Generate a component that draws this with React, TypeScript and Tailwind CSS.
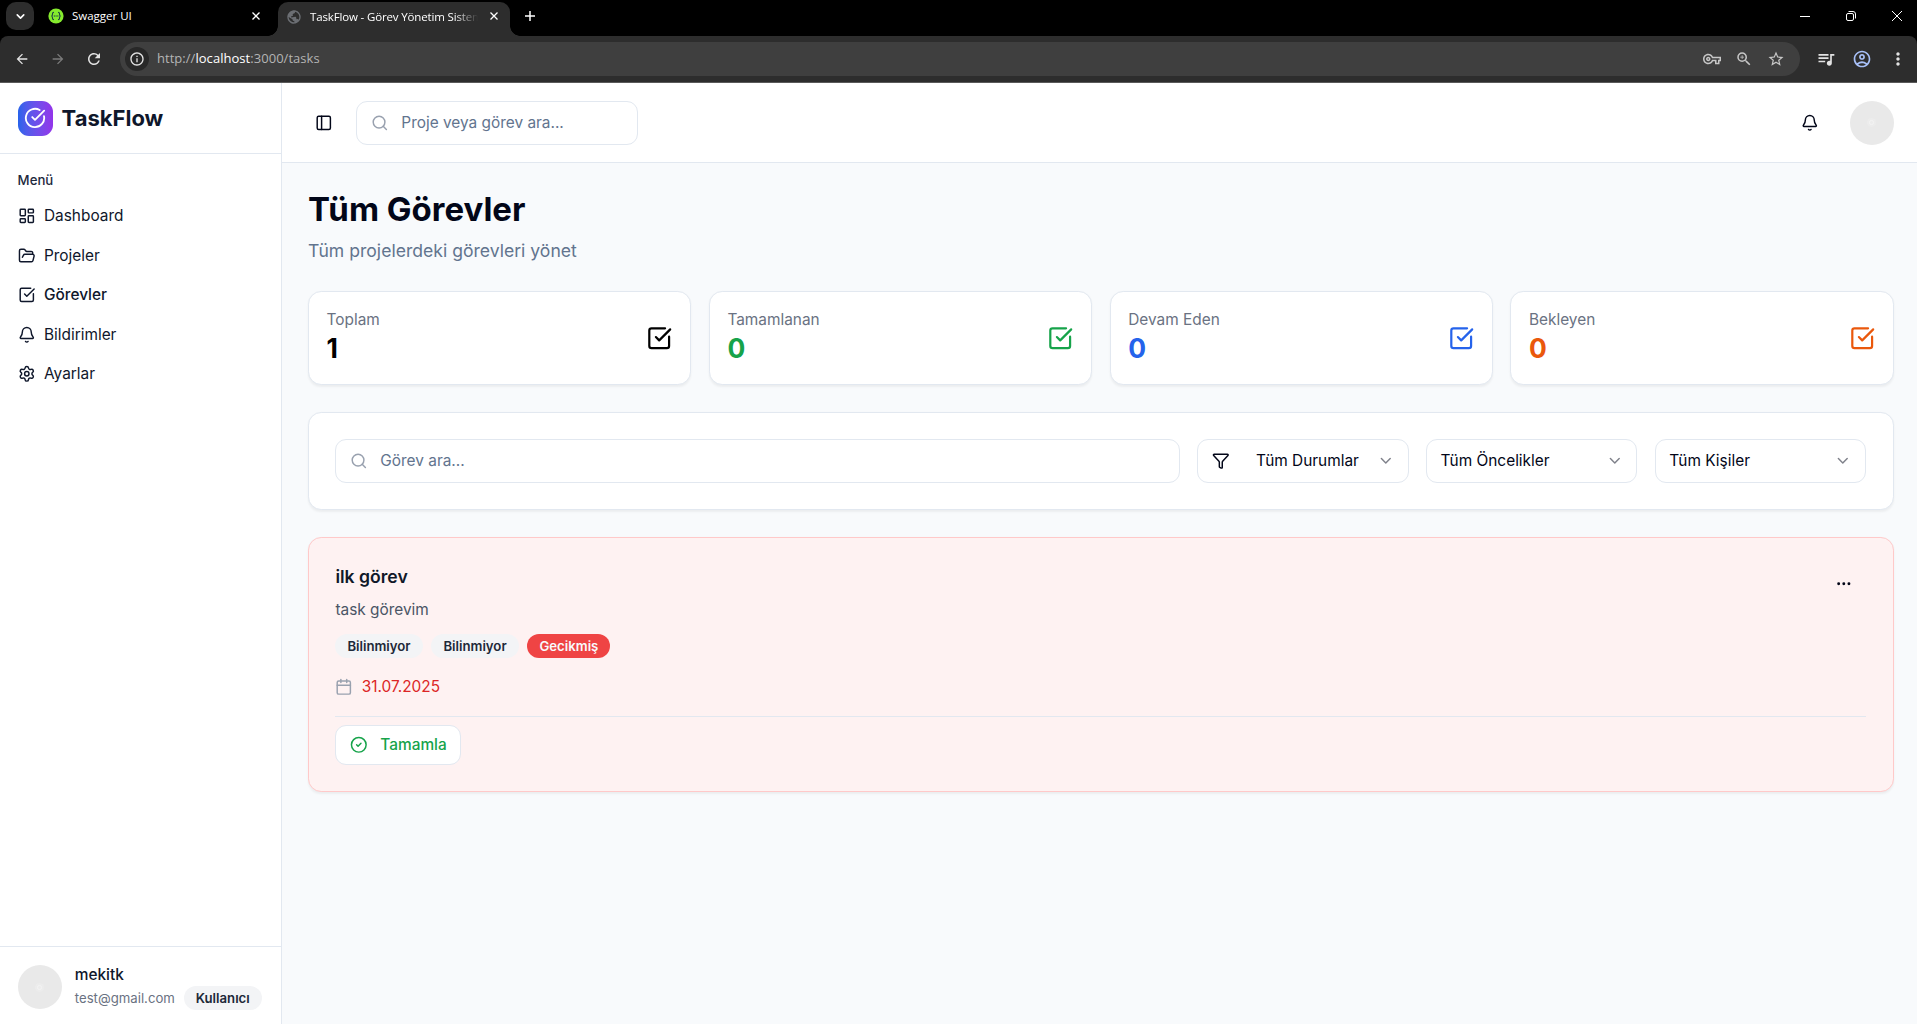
import React from "react";
import {
  Bell,
  Calendar,
  ChevronDown,
  CircleCheck,
  CircleCheckBig,
  Ellipsis,
  FolderOpen,
  Funnel,
  LayoutDashboard,
  PanelLeft,
  Search,
  Settings,
  SquareCheckBig,
} from "lucide-react";
import {
  MdArrowBack,
  MdArrowForward,
  MdMoreVert,
  MdOutlineAccountCircle,
  MdOutlineInfo,
  MdOutlineVpnKey,
  MdPublic,
  MdQueueMusic,
  MdRefresh,
  MdStarBorder,
  MdZoomIn,
} from "react-icons/md";

function CloseGlyph({ className }: { className?: string }) {
  return (
    <svg viewBox="0 0 8 8" className={className} fill="none" stroke="currentColor" strokeWidth="1.3">
      <path d="M0.5 0.5 7.5 7.5M7.5 0.5 0.5 7.5" />
    </svg>
  );
}

function SwaggerIcon() {
  return (
    <svg viewBox="0 0 16 16" className="size-4 shrink-0">
      <circle cx="8" cy="8" r="7.6" fill="#85ea2d" />
      <g fill="none" stroke="#173647" strokeWidth="1.1">
        <path d="M6 4.2c-1.3 0-1.5.6-1.5 1.6S4.3 8 3.4 8c.9 0 1.1 1.2 1.1 2.2s.2 1.6 1.5 1.6" />
        <path d="M10 4.2c1.3 0 1.5.6 1.5 1.6S11.7 8 12.6 8c-.9 0-1.1 1.2-1.1 2.2s-.2 1.6-1.5 1.6" />
        <path d="M5.8 8h4.6" strokeDasharray="1.2 .5" />
      </g>
    </svg>
  );
}

function TabStrip() {
  return (
    <div className="flex h-9 shrink-0 items-start bg-black text-white">
      <div className="ml-1.5 mt-0.5 flex size-7 items-center justify-center rounded-[10px] bg-[#2d2d2d]">
        <ChevronDown size={13} strokeWidth={3} />
      </div>
      <div className="ml-3.5 flex h-8 w-[230px] items-center gap-2">
        <SwaggerIcon />
        <span className="flex-1 text-[11.5px]">Swagger UI</span>
        <CloseGlyph className="mr-[18px] size-2" />
      </div>
      <div className="relative mt-0.5 flex h-[34px] w-[232px] items-center rounded-t-[10px] bg-[#2d2d2d] pb-1 before:absolute before:bottom-0 before:-left-2.5 before:size-2.5 before:bg-[radial-gradient(circle_at_0_0,transparent_9.5px,#2d2d2d_10px)] after:absolute after:bottom-0 after:-right-2.5 after:size-2.5 after:bg-[radial-gradient(circle_at_100%_0,transparent_9.5px,#2d2d2d_10px)]">
        <MdPublic size={16} className="ml-2 shrink-0 -rotate-12 text-[#6b6e73]" />
        <span className="ml-2 w-[168px] overflow-hidden text-[11.5px] tracking-[-0.15px] whitespace-nowrap [mask-image:linear-gradient(to_right,black_144px,transparent_168px)]">
          TaskFlow - Görev Yönetim Sistemi
        </span>
        <CloseGlyph className="absolute top-[10px] right-3 size-2" />
      </div>
      <svg viewBox="0 0 10 10" className="mt-[11px] ml-[15px] size-2.5" stroke="white" strokeWidth="1.5">
        <path d="M5 0v10M0 5h10" />
      </svg>
      <div className="mt-[11px] ml-auto mr-[15px] flex items-start gap-9">
        <svg viewBox="0 0 10 10" className="size-2.5" stroke="white">
          <path d="M0 5.5h10" />
        </svg>
        <svg viewBox="0 0 10 10" className="size-2.5" fill="none" stroke="white">
          <rect x=".5" y="2.5" width="7" height="7" rx="1.5" />
          <path d="M2.5.5H7A2.5 2.5 0 0 1 9.500 3v4.500" />
        </svg>
        <svg viewBox="0 0 10 10" className="size-2.5" stroke="white">
          <path d="M0 0 10 10M10 0 0 10" />
        </svg>
      </div>
    </div>
  );
}

function Toolbar() {
  return (
    <div className="bg-black">
      <div className="flex h-[47px] shrink-0 items-center rounded-t-[8px] border-b border-[#5a5a5a] bg-[#2d2d2d] text-[#e3e3e3]">
        <MdArrowBack size={16} className="ml-3.5" />
        <MdArrowForward size={16} className="ml-5 text-[#7b7b7b]" />
        <MdRefresh size={18} className="ml-[19px]" />
        <div className="ml-[17px] flex h-[34px] flex-1 items-center rounded-full bg-[#3f3f3f]">
          <div className="ml-[5px] flex size-6 items-center justify-center rounded-full bg-[#282828]">
            <MdOutlineInfo size={16} />
          </div>
          <span className="ml-2 text-[13px] tracking-[0.04px] text-[#b4b4b4]">
            http://<span className="text-white">localhost</span>:3000/tasks
          </span>
          <div className="mr-[15px] ml-auto flex items-center gap-4 text-[#c7c7c7]">
            <MdOutlineVpnKey size={18} className="mr-[-2px]" />
            <MdZoomIn size={18} />
            <MdStarBorder size={18} className="-ml-0.5" />
          </div>
        </div>
        <MdQueueMusic size={20} className="ml-4" />
        <MdOutlineAccountCircle size={20} className="ml-4 text-[#a8c0f8]" />
        <MdMoreVert size={20} className="ml-4 mr-[9px]" />
      </div>
    </div>
  );
}

function Avatar() {
  return (
    <div className="flex size-10 shrink-0 items-center justify-center rounded-full bg-[#e9e9e9]">
      <div className="flex size-2 items-center justify-center rounded-full bg-[#ececec]">
        <div className="size-1 rounded-full border border-[#f4f4f4]" />
      </div>
    </div>
  );
}

const menu = [
  { label: "Dashboard", icon: LayoutDashboard },
  { label: "Projeler", icon: FolderOpen },
  { label: "Görevler", icon: SquareCheckBig, active: true },
  { label: "Bildirimler", icon: Bell },
  { label: "Ayarlar", icon: Settings },
];

function Sidebar() {
  return (
    <aside className="flex w-64 shrink-0 flex-col border-r border-slate-200 bg-white text-slate-900">
      <div className="flex h-16 shrink-0 items-center gap-2 px-4">
        <div className="flex size-8 items-center justify-center rounded-[10px] bg-linear-to-r from-[#2563eb] to-[#9333ea] text-white">
          <CircleCheckBig size={20} />
        </div>
        <span className="text-xl font-bold">TaskFlow</span>
      </div>
      <nav className="flex flex-1 flex-col border-t border-slate-200 p-2">
        <div className="flex h-8 items-center px-2 text-xs font-medium text-slate-800">Menü</div>
        <ul className="flex flex-col gap-1">
          {menu.map(({ label, icon: Icon, active }) => (
            <li
              key={label}
              className={
                active
                  ? "flex h-8 items-center gap-2 px-2 text-sm font-medium"
                  : "flex h-8 items-center gap-2 px-2 text-sm"
              }
            >
              <Icon size={16} />
              {label}
            </li>
          ))}
        </ul>
      </nav>
      <div className="flex items-center gap-3 border-t border-slate-200 p-4">
        <Avatar />
        <div>
          <p className="text-sm font-medium">mekitk</p>
          <div className="flex items-center gap-2">
            <span className="text-xs text-gray-500">test@gmail.com</span>
            <span className="rounded-full border border-transparent bg-gray-100 px-2.5 py-0.5 text-xs font-semibold text-gray-800">
              Kullanıcı
            </span>
          </div>
        </div>
      </div>
    </aside>
  );
}

function SearchField({ placeholder, className }: { placeholder: string; className: string }) {
  return (
    <div className={className}>
      <div className="flex h-10 items-center gap-3 rounded-[10px] border border-slate-200 bg-white pl-3 text-sm text-slate-500">
        <Search size={16} className="text-gray-400" />
        <span>{placeholder}</span>
      </div>
    </div>
  );
}

function TopBar() {
  return (
    <header className="flex items-center gap-4 border-b border-slate-200 bg-white px-6 py-4 text-slate-950">
      <div className="flex size-7 items-center justify-center">
        <PanelLeft size={16} />
      </div>
      <SearchField placeholder="Proje veya görev ara..." className="w-64" />
      <div className="ml-auto flex size-10 items-center justify-center">
        <Bell size={16} />
      </div>
      <Avatar />
    </header>
  );
}

const stats = [
  { label: "Toplam", value: 1, color: "text-black" },
  { label: "Tamamlanan", value: 0, color: "text-[#16a34a]" },
  { label: "Devam Eden", value: 0, color: "text-[#2563eb]" },
  { label: "Bekleyen", value: 0, color: "text-[#ea580c]" },
];

function Stats() {
  return (
    <section className="grid grid-cols-4 gap-4">
      {stats.map((s) => (
        <div
          key={s.label}
          className="flex items-center justify-between rounded-xl border border-slate-200 bg-white p-4 shadow-[0_1px_2px_rgba(0,0,0,0.05)]"
        >
          <div>
            <p className="text-sm text-gray-500">{s.label}</p>
            <p className={`text-2xl font-bold ${s.color}`}>{s.value}</p>
          </div>
          <SquareCheckBig size={24} className={s.color} />
        </div>
      ))}
    </section>
  );
}

function Select({ label, icon }: { label: string; icon?: React.ReactNode }) {
  return (
    <div className="flex h-10 w-48 items-center justify-between rounded-[10px] border border-slate-200 bg-white px-3 text-sm text-slate-950">
      {icon}
      <span>{label}</span>
      <ChevronDown size={16} className="opacity-50" />
    </div>
  );
}

function Filters() {
  return (
    <section className="flex gap-4 rounded-xl border border-slate-200 bg-white p-6 shadow-[0_1px_2px_rgba(0,0,0,0.05)]">
      <SearchField placeholder="Görev ara..." className="flex-1" />
      <Select label="Tüm Durumlar" icon={<Funnel size={16} className="mr-2" />} />
      <Select label="Tüm Öncelikler" />
      <Select label="Tüm Kişiler" />
    </section>
  );
}

function TaskCard() {
  return (
    <article className="rounded-xl border border-red-200 bg-[#fef2f2] p-6 shadow-[0_1px_2px_rgba(0,0,0,0.05)]">
      <div className="flex items-start justify-between">
        <div>
          <h3 className="text-base leading-6 font-semibold text-gray-900">ilk görev</h3>
          <p className="mt-2 text-sm text-gray-600">task görevim</p>
          <div className="mt-3 flex gap-2 text-xs font-semibold">
            <span className="rounded-full border border-transparent bg-gray-100 px-2.5 py-0.5 text-gray-800">
              Bilinmiyor
            </span>
            <span className="rounded-full border border-transparent bg-gray-100 px-2.5 py-0.5 text-gray-800">
              Bilinmiyor
            </span>
            <span className="rounded-full border border-transparent bg-[#ef4444] px-2.5 py-0.5 text-slate-50">
              Gecikmiş
            </span>
          </div>
        </div>
        <div className="flex h-9 items-center px-3 text-slate-950">
          <Ellipsis size={16} />
        </div>
      </div>
      <div className="mt-4 flex items-center gap-2 text-sm text-[#dc2626]">
        <Calendar size={16} className="text-gray-400" />
        31.07.2025
      </div>
      <div className="mt-4 flex border-t border-slate-200 pt-2">
        <button className="flex h-9 items-center gap-3 rounded-[10px] border border-slate-200 bg-white px-3 text-sm font-medium text-[#16a34a]">
          <CircleCheck size={16} />
          Tamamla
        </button>
      </div>
    </article>
  );
}

export default function App() {
  return (
    <div className="h-screen w-screen overflow-hidden">
      <div className="flex h-[1028px] flex-col font-['Open_Sans',sans-serif]">
        <TabStrip />
        <Toolbar />
        <div className="flex min-h-0 w-[1920px] flex-1 bg-[#f8fafc] font-['Inter',sans-serif]">
          <div className="flex w-full [zoom:1.1]">
            <Sidebar />
            <div className="flex flex-1 flex-col">
              <TopBar />
              <main className="flex flex-col gap-6 p-6">
                <div>
                  <h1 className="text-3xl font-bold text-slate-950">Tüm Görevler</h1>
                  <p className="mt-2 text-slate-500">Tüm projelerdeki görevleri yönet</p>
                </div>
                <Stats />
                <Filters />
                <TaskCard />
              </main>
            </div>
          </div>
        </div>
      </div>
    </div>
  );
}
